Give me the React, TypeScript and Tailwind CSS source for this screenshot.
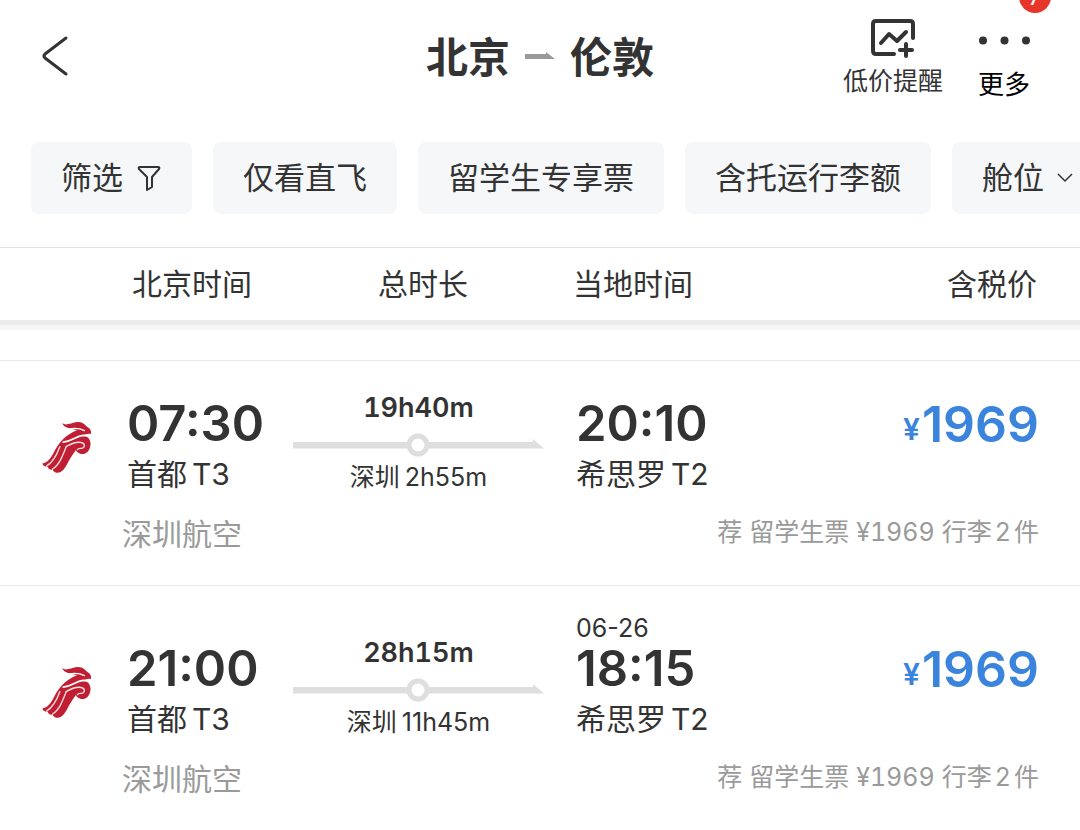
import React from "react";

type Flight = {
  id: string;
  depart: string;
  from: string;
  fromTerminal: string;
  duration: string;
  stopCity: string;
  stopTime: string;
  arriveDate?: string;
  arrive: string;
  to: string;
  toTerminal: string;
  price: string;
  airline: string;
  bags: string;
};

const flights: Flight[] = [
  {
    id: "a",
    depart: "07:30",
    from: "首都",
    fromTerminal: "T3",
    duration: "19h40m",
    stopCity: "深圳",
    stopTime: "2h55m",
    arrive: "20:10",
    to: "希思罗",
    toTerminal: "T2",
    price: "1969",
    airline: "深圳航空",
    bags: "2",
  },
  {
    id: "b",
    depart: "21:00",
    from: "首都",
    fromTerminal: "T3",
    duration: "28h15m",
    stopCity: "深圳",
    stopTime: "11h45m",
    arriveDate: "06-26",
    arrive: "18:15",
    to: "希思罗",
    toTerminal: "T2",
    price: "1969",
    airline: "深圳航空",
    bags: "2",
  },
];

function AirlineLogo() {
  return (
    <svg viewBox="36 38 146 150" className="h-[52px] w-[50px]" aria-hidden="true">
      <path
        d="M95 44C108 52 120 42 140 40C156 39 162 50 172 57C178 62 181 68 178 76C172 73 166 75 160 80C174 84 180 97 177 110C174 128 160 138 146 132C140 130 136 127 135 122C124 138 116 150 110 162C102 176 94 190 78 188C72 187 69 184 67 179C60 181 54 177 52 170C45 171 38 167 37 161C52 160 62 145 70 130C78 114 88 100 98 90C108 80 122 70 138 64C130 60 122 61 114 58C104 55 97 51 95 44Z"
        fill="#c01f33"
      />
      <g fill="none" stroke="#fff" strokeLinecap="round">
        <path d="M112 61C130 57 146 58 160 65" strokeWidth="4" />
        <path d="M98 99C122 96 134 82 156 79L182 80" strokeWidth="5" />
        <path d="M106 112C124 102 142 96 154 101C164 106 160 118 150 117C146 117 142 116 139 121" strokeWidth="4" stroke="#fbe3e3" />
        <path d="M88 112C80 134 70 156 50 168" strokeWidth="4" stroke="#fbdcdc" />
        <path d="M106 114C96 140 86 166 66 178" strokeWidth="4" stroke="#fbdcdc" />
      </g>
    </svg>
  );
}

function RouteLine() {
  return (
    <svg viewBox="0 0 251 24" className="h-[24px] w-full" aria-hidden="true">
      <path d="M0 9H240V6L251 15.500H0Z" fill="#dedede" />
      <circle cx="125" cy="12" r="9" fill="#fff" stroke="#dedede" strokeWidth="5" />
    </svg>
  );
}

function Place({ name, terminal }: { name: string; terminal: string }) {
  return (
    <div className="flex gap-[5px] text-[30px] leading-[46px]">
      <span>{name}</span>
      <span>{terminal}</span>
    </div>
  );
}

function FlightCard({ flight }: { flight: Flight }) {
  return (
    <li className="border-b border-[#e9e9e9] pt-[28px] pb-[30px] pr-[41px]">
      <div className="grid min-h-[108px] grid-cols-[127px_166px_251px_32px_1fr] items-end">
        <div className="flex h-[100px] items-center pl-[42px]">
          <AirlineLogo />
        </div>
        <div>
          <div className="text-[49px] leading-[54px] font-semibold">{flight.depart}</div>
          <Place name={flight.from} terminal={flight.fromTerminal} />
        </div>
        <div className="text-center">
          <div className="mb-[6px] text-[27px] leading-[38px] font-semibold tabular-nums">{flight.duration}</div>
          <RouteLine />
          <div className="flex justify-center gap-[5px] text-[25px] leading-[40px]">
            <span>{flight.stopCity}</span>
            <span>{flight.stopTime}</span>
          </div>
        </div>
        <div className="col-start-5 flex justify-between">
          <div>
            {flight.arriveDate && (
              <div className="text-[25px] leading-[28px]">{flight.arriveDate}</div>
            )}
            <div className="text-[49px] leading-[54px] font-semibold">{flight.arrive}</div>
            <Place name={flight.to} terminal={flight.toTerminal} />
          </div>
          <div className="flex h-[100px] items-start gap-[2px] self-end font-semibold text-[#3b84dd]">
            <span className="text-[30px] leading-[64px]">¥</span>
            <span className="text-[50px] leading-[54px]">{flight.price}</span>
          </div>
        </div>
      </div>
      <div className="mt-[18px] flex h-[40px] items-start justify-between pl-[122px] leading-[38px] text-[#9a9a9a]">
        <span className="text-[30px]">{flight.airline}</span>
        <span className="flex gap-[7px] text-[25px] leading-[34px] tabular-nums">
          <span>荐</span>
          <span>留学生票</span>
          <span>¥{flight.price}</span>
          <span className="flex gap-[3px]">
            <span>行李</span>
            <span>{flight.bags}</span>
            <span>件</span>
          </span>
        </span>
      </div>
    </li>
  );
}

const chip =
  "flex h-[72px] shrink-0 items-center rounded-[8px] bg-[#f5f7f9] px-[30px] text-[31px] whitespace-nowrap";

export default function App() {
  return (
    <div className="min-h-screen w-full overflow-hidden bg-white font-['Inter','Noto_Sans_CJK_SC',sans-serif] text-[#333]">
      <header className="grid grid-cols-[1fr_auto_1fr] items-start">
        <button type="button" aria-label="返回" className="mt-[34px] ml-[38px] w-fit">
          <svg viewBox="0 0 36 44" className="h-[44px] w-[36px]" fill="none" stroke="#333" strokeWidth="3" strokeLinecap="round" strokeLinejoin="round">
            <path d="M28 4L7 20Q5 22 7 24L28 40" />
          </svg>
        </button>
        <h1 className="mt-[30px] flex items-center gap-[15px] text-[42px] leading-[56px] font-bold">
          <span>北京</span>
          <svg viewBox="0 0 30 12" className="h-[12px] w-[30px]" aria-label="至">
            <path d="M0 2H21V0L30 7H0Z" fill="#999" />
          </svg>
          <span>伦敦</span>
        </h1>
        <div className="flex justify-end gap-[35px] pr-[50px]">
          <button type="button" className="flex flex-col items-center pt-[18px]">
            <svg viewBox="0 0 46 40" className="h-[40px] w-[46px]" fill="none" stroke="#333" strokeWidth="4" strokeLinecap="round" strokeLinejoin="round" aria-hidden="true">
              <path d="M24 36H6Q3 36 3 33V6Q3 3 6 3H40Q43 3 43 6V20" />
              <path d="M11 25L19 16L27 23L36 14" />
              <path d="M36 26V38M30 32H42" />
            </svg>
            <span className="mt-[5px] text-[25px] leading-[36px]">低价提醒</span>
          </button>
          <button type="button" className="relative flex flex-col items-center pt-[31px] text-black">
            <svg viewBox="0 0 52 20" className="h-[20px] w-[52px]" fill="#333" aria-hidden="true">
              <circle cx="5" cy="9.500" r="4" />
              <circle cx="26.500" cy="9.500" r="4" />
              <circle cx="48" cy="9.500" r="4" />
            </svg>
            <span className="mt-[16px] text-[26px] leading-[36px]">更多</span>
            <span className="absolute -top-[19px] -right-[21px] flex h-[32px] w-[32px] items-center justify-center rounded-full bg-[#e8352a] text-[24px] text-white">
              7
            </span>
          </button>
        </div>
      </header>

      <nav className="mt-[39px] flex gap-[21px] overflow-hidden pl-[31px]" aria-label="筛选条件">
        <button type="button" className={chip}>
          筛选
          <svg viewBox="0 0 25 26" className="ml-[14px] h-[26px] w-[25px]" fill="none" stroke="#333" strokeWidth="2" strokeLinejoin="round" aria-hidden="true">
            <path d="M3 2H21Q23 2 22 4L15 12V22L10 25V12L2 4Q1 2 3 2Z" />
          </svg>
        </button>
        <button type="button" className={chip}>仅看直飞</button>
        <button type="button" className={chip}>留学生专享票</button>
        <button type="button" className={chip}>含托运行李额</button>
        <button type="button" className={chip}>
          舱位
          <svg viewBox="0 0 16 12" className="ml-[13px] h-[12px] w-[16px]" fill="none" stroke="#333" strokeWidth="1.500" aria-hidden="true">
            <path d="M1 2L8 9L15 2" />
          </svg>
        </button>
      </nav>

      <div className="mt-[33px] grid grid-cols-[132px_161px_260px_20px_1fr] border-t border-[#e3e3e3] pr-[43px] text-[30px] leading-[72px]">
        <span className="col-start-2">北京时间</span>
        <span className="text-center">总时长</span>
        <span className="col-start-5 flex justify-between">
          <span>当地时间</span>
          <span>含税价</span>
        </span>
      </div>
      <div className="h-[5px] bg-[#ececec]" />
      <div className="h-[5px] bg-[#f6f6f6]" />

      <ul className="mt-[30px] border-t border-[#e9e9e9]">
        {flights.map((f) => (
          <FlightCard key={f.id} flight={f} />
        ))}
      </ul>
    </div>
  );
}
